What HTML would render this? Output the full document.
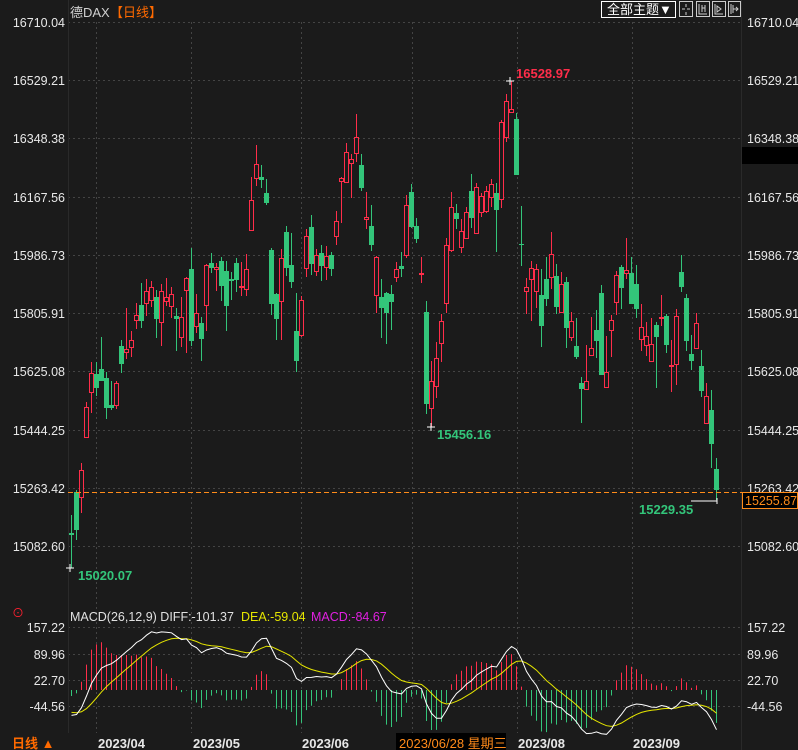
<!DOCTYPE html>
<html><head><meta charset="utf-8"><style>
html,body{margin:0;padding:0;background:#1b1b1b;width:798px;height:750px;overflow:hidden}
svg{display:block}
text{font-family:"Liberation Sans","Noto Sans CJK SC",sans-serif}
</style></head><body>
<svg id="s" width="798" height="750" xmlns="http://www.w3.org/2000/svg">
<rect width="798" height="750" fill="#1b1b1b"/>
<g id="grid"></g>
<g id="candles"></g>
<g id="macd"></g>
<text x="70" y="17" font-size="13" fill="#d0d0d0">德DAX</text>
<text x="110" y="17" font-size="13" fill="#ff6a00">【日线】</text>
<rect x="601.5" y="1.5" width="74" height="16" fill="none" stroke="#fff" stroke-width="1"/>
<text x="607" y="14" font-size="13" fill="#fff">全部主题▼</text>
<g fill="none" stroke="#ccc" stroke-width="1">
<rect x="679.5" y="1.5" width="13" height="15"/><rect x="696.5" y="1.5" width="13" height="15"/><rect x="712.5" y="1.5" width="13" height="15"/><rect x="728.5" y="1.5" width="12" height="15"/>
<path d="M686 4v3M686 12v3M682 9h3M687 9h3M699 4v10h8M702 5v7M705 5v7M702 8h3M715 4v10h8M717 6l4 3-4 3zM731 4v10M733 5v8M733 9h5M736 7l2 2-2 2"/>
</g>
<rect x="742" y="147" width="56" height="17" fill="#000"/>
<text x="12" y="617" font-size="12" fill="#ff2030">⊙</text>
<text x="70" y="621" font-size="12.5" fill="#e0e0e0">MACD(26,12,9) DIFF:-101.37</text>
<text x="241" y="621" font-size="12.5" fill="#e6e600">DEA:-59.04</text>
<text x="311" y="621" font-size="12.5" fill="#e020e0">MACD:-84.67</text>
<g font-size="13" fill="#e8e8e8" font-weight="bold">
<text x="98" y="748">2023/04</text><text x="193" y="748">2023/05</text><text x="302" y="748">2023/06</text><text x="518" y="748">2023/08</text><text x="633" y="748">2023/09</text>
</g>
<rect x="396" y="733" width="110" height="17" fill="#000"/>
<text x="399" y="748" font-size="13" fill="#ff8a1a">2023/06/28 星期三</text>
<text x="12" y="748" font-size="13" fill="#ff6a00" font-weight="bold">日线 ▲</text>
<text x="516" y="78" font-size="13" fill="#ff2d4a" font-weight="bold">16528.97</text>
<text x="437" y="439" font-size="13" fill="#33c57a" font-weight="bold">15456.16</text>
<text x="78" y="580" font-size="13" fill="#33c57a" font-weight="bold">15020.07</text>
<text x="639" y="514" font-size="13" fill="#33c57a" font-weight="bold">15229.35</text>
<path d="M506 81h8M510 77v8M427 427h8M431 423v8M66 568h8M70 564v8M691 501h26M717 498v6" stroke="#fff" stroke-width="1"/>
<line x1="68" y1="492.5" x2="742" y2="492.5" stroke="#ff8c1a" stroke-dasharray="5,3"/>
<rect x="742.5" y="492.5" width="55" height="16" fill="#000" stroke="#ff8c1a"/>
<text x="745" y="505" font-size="12.5" fill="#ff8c1a">15255.87</text>
</svg>
<script>
var D=[[515,568,533,535,'g'],[490,540,492,530,'g'],[463,513,470,497,'r'],[402,437,407,437,'r'],[362,413,373,392,'r'],[362,396,374,388,'g'],[337,381,369,381,'g'],[372,419,378,408,'g'],[381,410,405,408,'g'],[381,409,383,405,'r'],[340,373,346,364,'g'],[308,359,349,352,'r'],[331,357,340,347,'r'],[303,329,315,320,'r'],[283,328,305,321,'g'],[279,316,291,303,'r'],[281,307,287,300,'r'],[290,338,297,319,'g'],[284,346,291,322,'r'],[278,306,297,301,'r'],[287,318,294,306,'r'],[308,351,316,319,'g'],[297,347,317,337,'r'],[277,353,278,290,'r'],[248,346,269,341,'g'],[294,333,313,326,'r'],[317,361,323,339,'g'],[264,331,265,305,'r'],[253,273,263,268,'g'],[263,291,267,269,'r'],[257,301,261,286,'g'],[261,331,271,306,'g'],[272,300,279,281,'g'],
[258,292,263,280,'g'],[262,296,286,287,'r'],[254,296,269,289,'r'],[177,230,200,230,'r'],[145,186,164,178,'r'],[165,188,177,180,'g'],[179,205,193,203,'g'],[248,315,250,304,'g'],[293,340,294,319,'g'],[249,340,258,301,'r'],[226,276,232,268,'g'],[233,288,265,282,'g'],[293,372,331,361,'g'],[296,337,300,335,'r'],[229,277,236,268,'r'],[215,275,227,264,'g'],[249,276,255,271,'r'],[245,281,253,266,'g'],[246,280,256,267,'r'],[252,276,255,269,'g'],[211,245,221,236,'r'],[177,223,178,181,'r'],[143,182,152,182,'r'],[154,198,159,163,'r'],[114,162,137,153,'r'],[154,191,165,188,'g'],[192,229,217,219,'r'],[205,251,226,245,'g'],[256,313,257,295,'r'],[279,338,297,308,'g'],[292,344,293,313,'g'],[285,330,294,302,'g'],[262,282,269,277,'r'],
[252,277,266,269,'g'],[195,258,205,255,'r'],[184,228,192,227,'g'],[218,243,226,239,'g'],[257,283,273,274,'r'],[301,414,312,404,'g'],[361,427,381,408,'r'],[342,398,358,386,'r'],[314,362,321,343,'r'],[238,313,245,303,'r'],[192,252,207,250,'r'],[204,229,213,219,'g'],[219,253,231,247,'r'],[207,239,212,238,'r'],[174,228,191,218,'g'],[183,234,187,233,'r'],[193,217,196,212,'r'],[186,213,191,211,'r'],[179,207,184,197,'r'],[183,252,193,210,'g'],[120,208,122,199,'r'],[94,142,101,137,'r'],[81,113,109,112,'r'],[113,175,119,175,'g'],[206,266,244,245,'g'],[278,314,287,291,'r'],[261,321,268,279,'r'],[264,308,269,291,'r'],[269,347,295,326,'g'],[257,306,279,299,'g'],[232,289,254,277,'r'],[264,314,276,307,'g'],[272,312,284,312,'r'],
[277,348,282,328,'g'],[312,341,321,337,'r'],[318,359,346,357,'g'],[377,423,383,389,'g'],[345,389,381,389,'r'],[317,356,348,355,'r'],[310,358,330,341,'g'],[285,375,293,375,'g'],[336,387,372,387,'r'],[315,357,320,330,'r'],[271,315,275,302,'r'],[265,309,267,288,'g'],[238,279,270,273,'r'],[257,304,273,304,'g'],[265,318,284,309,'g'],[304,351,327,339,'r'],[322,356,336,345,'r'],[318,361,344,361,'r'],[322,388,325,337,'g'],[295,326,317,318,'r'],[314,353,316,345,'g'],[340,392,365,366,'r'],[309,385,316,364,'r'],[255,292,272,287,'g'],[294,351,298,341,'g'],[335,370,354,361,'g'],[313,349,323,348,'r'],[350,397,366,391,'g'],[383,423,396,423,'r'],[390,468,410,444,'g'],[458,500,469,490,'g']];
var R='#ff2d4a',G='#33c57a';
var g='';
var py=[22,80,138,197,255,313,371,430,488,546],pl=['16710.04','16529.21','16348.38','16167.56','15986.73','15805.91','15625.08','15444.25','15263.42','15082.60'];
for(var i=0;i<py.length;i++){g+='<line x1="68" y1="'+(py[i]+.5)+'" x2="742" y2="'+(py[i]+.5)+'" stroke="#444" stroke-dasharray="2,3"/>';
g+='<text x="65" y="'+(py[i]+5)+'" font-size="12.5" fill="#e8e8e8" text-anchor="end">'+pl[i]+'</text>';
if(i!=8)g+='<text x="747" y="'+(py[i]+5)+'" font-size="12.5" fill="#e8e8e8">'+pl[i]+'</text>';}
g+='<text x="747" y="493" font-size="12.5" fill="#e8e8e8">15263.42</text>';
var my=[627,654,680,706],ml=['157.22','89.96','22.70','-44.56'];
for(i=0;i<4;i++){g+='<line x1="68" y1="'+(my[i]+.5)+'" x2="742" y2="'+(my[i]+.5)+'" stroke="#444" stroke-dasharray="2,3"/>';
g+='<text x="65" y="'+(my[i]+5)+'" font-size="12.5" fill="#e8e8e8" text-anchor="end">'+ml[i]+'</text><text x="747" y="'+(my[i]+5)+'" font-size="12.5" fill="#e8e8e8">'+ml[i]+'</text>';}
[96,191,301,412,517,632].forEach(function(x){g+='<line x1="'+(x+.5)+'" y1="22" x2="'+(x+.5)+'" y2="733" stroke="#444" stroke-dasharray="2,3"/>';});
g+='<line x1="68.5" y1="0" x2="68.5" y2="733" stroke="#2a2a2a"/><line x1="741.5" y1="0" x2="741.5" y2="750" stroke="#2a2a2a"/>';
document.getElementById('grid').innerHTML=g;
var c='';
for(i=0;i<D.length;i++){var d=D[i],x=71+5*i,col=d[4]=='r'?R:G;
c+='<line x1="'+(x+.5)+'" y1="'+d[0]+'" x2="'+(x+.5)+'" y2="'+d[1]+'" stroke="'+col+'"/>';
var h=Math.max(1,d[3]-d[2]);
if(d[4]=='r')c+='<rect x="'+(x-1.5)+'" y="'+(d[2]+.5)+'" width="4" height="'+h+'" fill="#1b1b1b" stroke="'+col+'"/>';
else c+='<rect x="'+(x-2)+'" y="'+d[2]+'" width="5" height="'+h+'" fill="'+col+'"/>';}
document.getElementById('candles').innerHTML=c;
function pr(y){return 16710-(y-22)/0.322;}
var cl=D.map(function(d){return pr(d[4]=='r'?d[2]:d[3]);});
var e12=cl[0]+55,e26=cl[0]+120,dea=-55;var df=[],de=[],hs=[];
for(i=0;i<cl.length;i++){e12=e12+(cl[i]-e12)*2/13;e26=e26+(cl[i]-e26)*2/27;var f=e12-e26;dea=dea+(f-dea)*0.2;df.push(f);de.push(dea);hs.push(2*(f-dea));}
var sc=0.394,z=690,m='',p1='',p2='';
for(i=0;i<cl.length;i++){var x=71.5+5*i,v=hs[i];
m+='<line x1="'+x+'" y1="'+z+'" x2="'+x+'" y2="'+(z-v*sc)+'" stroke="'+(v>=0?R:G)+'"/>';
p1+=(i?'L':'M')+x+' '+(z-df[i]*sc).toFixed(1);p2+=(i?'L':'M')+x+' '+(z-de[i]*sc).toFixed(1);}
m+='<path d="'+p2+'" fill="none" stroke="#e6e600"/><path d="'+p1+'" fill="none" stroke="#fff"/>';
document.getElementById('macd').innerHTML=m;
</script>
</body></html>
